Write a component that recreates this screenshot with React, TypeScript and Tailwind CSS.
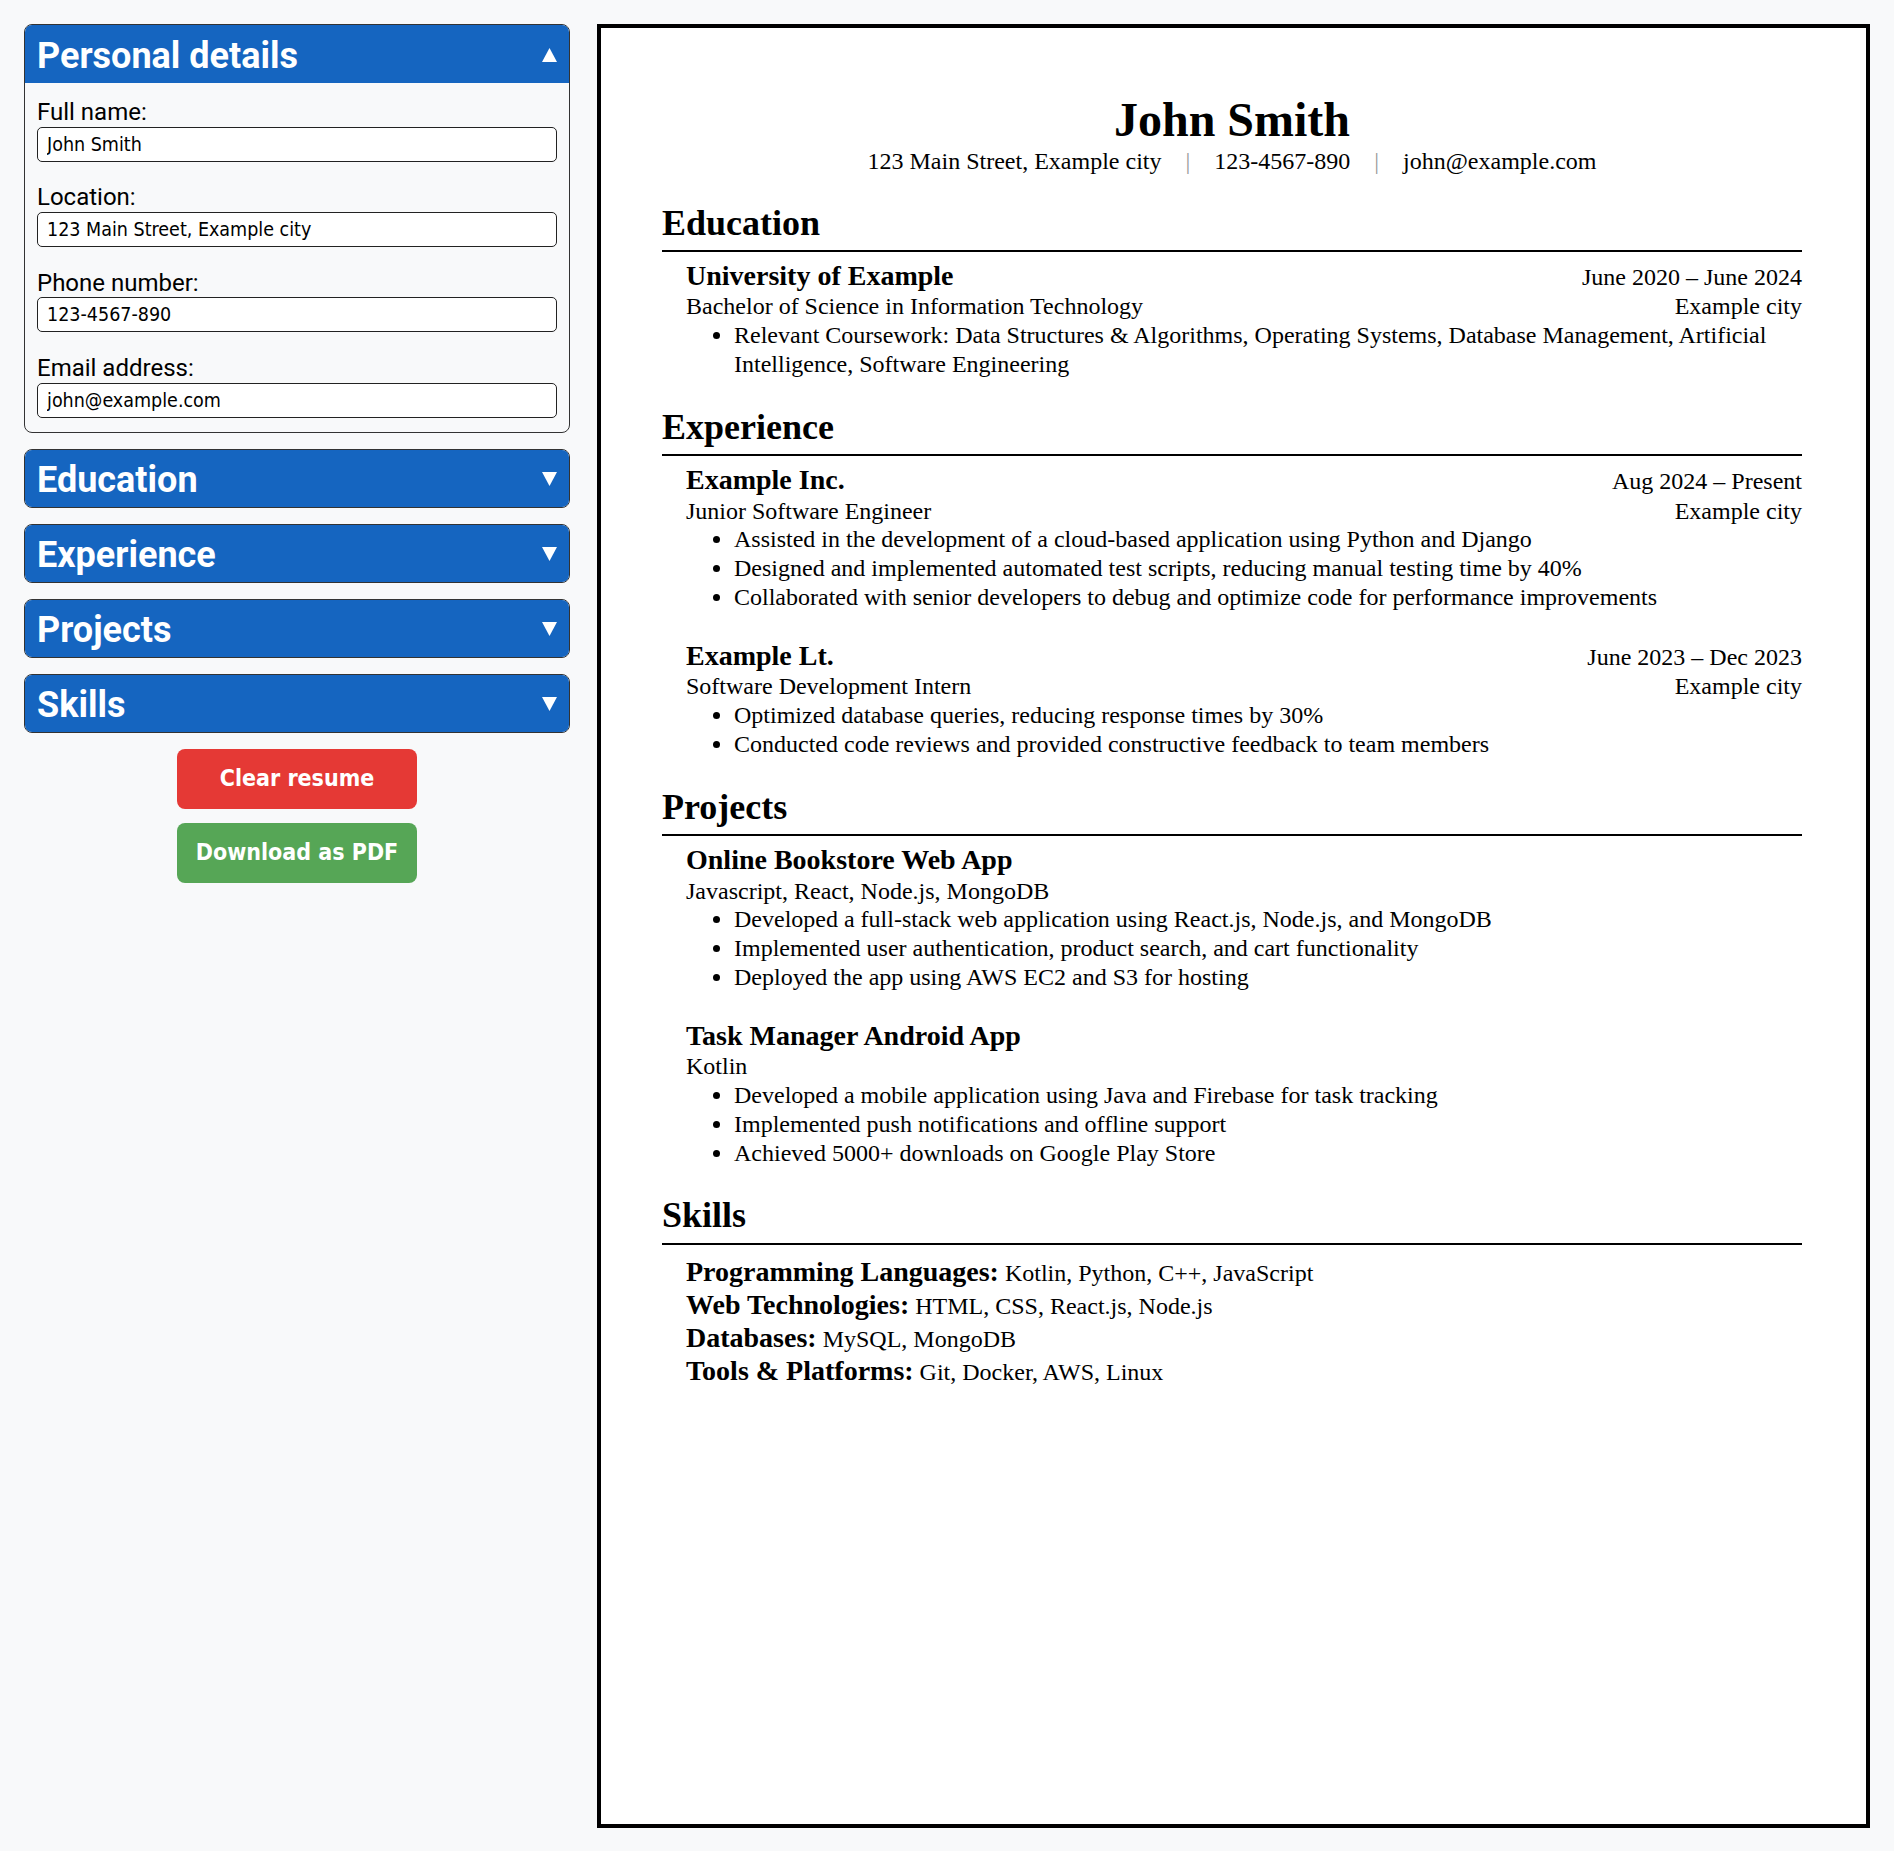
import React from "react";

const BLUE = "bg-[#1565c0]";

const fields = [
  { label: "Full name:", value: "John Smith" },
  { label: "Location:", value: "123 Main Street, Example city" },
  { label: "Phone number:", value: "123-4567-890" },
  { label: "Email address:", value: "john@example.com" },
];

const education = [
  {
    title: "University of Example",
    date: "June 2020 – June 2024",
    sub: "Bachelor of Science in Information Technology",
    place: "Example city",
    points: [
      "Relevant Coursework: Data Structures & Algorithms, Operating Systems, Database Management, Artificial Intelligence, Software Engineering",
    ],
  },
];

const experience = [
  {
    title: "Example Inc.",
    date: "Aug 2024 – Present",
    sub: "Junior Software Engineer",
    place: "Example city",
    points: [
      "Assisted in the development of a cloud-based application using Python and Django",
      "Designed and implemented automated test scripts, reducing manual testing time by 40%",
      "Collaborated with senior developers to debug and optimize code for performance improvements",
    ],
  },
  {
    title: "Example Lt.",
    date: "June 2023 – Dec 2023",
    sub: "Software Development Intern",
    place: "Example city",
    points: [
      "Optimized database queries, reducing response times by 30%",
      "Conducted code reviews and provided constructive feedback to team members",
    ],
  },
];

const projects = [
  {
    title: "Online Bookstore Web App",
    sub: "Javascript, React, Node.js, MongoDB",
    points: [
      "Developed a full-stack web application using React.js, Node.js, and MongoDB",
      "Implemented user authentication, product search, and cart functionality",
      "Deployed the app using AWS EC2 and S3 for hosting",
    ],
  },
  {
    title: "Task Manager Android App",
    sub: "Kotlin",
    points: [
      "Developed a mobile application using Java and Firebase for task tracking",
      "Implemented push notifications and offline support",
      "Achieved 5000+ downloads on Google Play Store",
    ],
  },
];

const skills = [
  { k: "Programming Languages:", v: "Kotlin, Python, C++, JavaScript" },
  { k: "Web Technologies:", v: "HTML, CSS, React.js, Node.js" },
  { k: "Databases:", v: "MySQL, MongoDB" },
  { k: "Tools & Platforms:", v: "Git, Docker, AWS, Linux" },
];

function Triangle({ up }: { up?: boolean }) {
  return (
    <svg width="15" height="14" viewBox="0 0 15 14" className="mt-[2px]">
      <polygon points={up ? "7.5,0 15,14 0,14" : "0,0 15,0 7.5,14"} fill="#fff" />
    </svg>
  );
}

function SectionHeader({ title, up }: { title: string; up?: boolean }) {
  return (
    <div className={`flex items-center justify-between px-3 ${up ? "h-[58px]" : "h-[57px]"} ${BLUE}`}>
      <span className="pt-[5px] text-[36px] font-bold leading-[1.2] text-white">{title}</span>
      <Triangle up={up} />
    </div>
  );
}

type Entry = { title: string; date?: string; sub: string; place?: string; points: string[] };

function ResumeEntry({ e }: { e: Entry }) {
  return (
    <div>
      <div className="flex items-baseline justify-between">
        <span className="text-[28px] font-bold">{e.title}</span>
        {e.date && <span>{e.date}</span>}
      </div>
      <div className="flex justify-between">
        <span>{e.sub}</span>
        {e.place && <span>{e.place}</span>}
      </div>
      <ul className="list-disc pl-[48px]">
        {e.points.map((p) => (
          <li key={p}>{p}</li>
        ))}
      </ul>
    </div>
  );
}

function ResumeSection({ title, first, children }: { title: string; first?: boolean; children: React.ReactNode }) {
  return (
    <section className={first ? "mt-[26px]" : "mt-[27px]"}>
      <h2 className="border-b-2 border-black pb-[5px] text-[36px] font-bold leading-[1.2]">{title}</h2>
      <div className="mt-[7px] flex flex-col gap-[27px] pl-[24px]">{children}</div>
    </section>
  );
}

export default function App() {
  return (
    <div className="flex min-h-screen gap-[27px] bg-[#f8f9fa] px-6 pt-6 pb-[23px]">
      {/* Editor column */}
      <div className="flex w-[546px] shrink-0 flex-col font-['Roboto',sans-serif]">
        <div className="overflow-hidden rounded-[8px] border border-[#333]">
          <SectionHeader title="Personal details" up />
          <div className="flex flex-col gap-[21.5px] px-3 pt-[15px] pb-[14px]">
            {fields.map((f) => (
              <label key={f.label} className="flex flex-col">
                <span className="text-[24px] leading-[1.2] text-black">{f.label}</span>
                <input
                  defaultValue={f.value}
                  className="h-[35px] rounded-[5px] border border-[#222] bg-white pl-[9px] font-['DejaVu_Sans_Condensed','DejaVu_Sans',sans-serif] text-[19.5px] text-black [font-stretch:condensed]"
                />
              </label>
            ))}
          </div>
        </div>

        {["Education", "Experience", "Projects", "Skills"].map((t) => (
          <div key={t} className="mt-4 overflow-hidden rounded-[8px] border border-[#333]">
            <SectionHeader title={t} />
          </div>
        ))}

        <div className="mt-4 flex flex-col items-center gap-[14px] font-['DejaVu_Sans_Condensed','DejaVu_Sans',sans-serif] [font-stretch:condensed]">
          <button className="h-[60px] w-[240px] rounded-[8px] bg-[#e53935] text-[23px] font-bold text-white">
            Clear resume
          </button>
          <button className="h-[60px] w-[240px] rounded-[8px] bg-[#56a656] text-[23px] font-bold text-white">
            Download as PDF
          </button>
        </div>
      </div>

      {/* Resume preview */}
      <div className="h-[1804px] flex-1 border-4 border-black bg-white pt-[66px] pr-[64px] pl-[61px] font-['Liberation_Serif','Times_New_Roman',serif] text-[24px] leading-[1.2] text-black">
        <h1 className="text-center text-[48px] font-bold leading-[1.1]">John Smith</h1>
        <div className="flex justify-center">
          <span>123 Main Street, Example city</span>
          <span className="mx-6 text-[#999]">|</span>
          <span>123-4567-890</span>
          <span className="mx-6 text-[#999]">|</span>
          <span>john@example.com</span>
        </div>

        <ResumeSection title="Education" first>
          {education.map((e) => (
            <ResumeEntry key={e.title} e={e} />
          ))}
        </ResumeSection>

        <ResumeSection title="Experience">
          {experience.map((e) => (
            <ResumeEntry key={e.title} e={e} />
          ))}
        </ResumeSection>

        <ResumeSection title="Projects">
          {projects.map((e) => (
            <ResumeEntry key={e.title} e={e} />
          ))}
        </ResumeSection>

        <ResumeSection title="Skills">
          <div className="mt-[3px]">
            {skills.map((s) => (
              <div key={s.k} className="flex h-[33px] items-baseline gap-[6px]">
                <span className="text-[28px] font-bold">{s.k}</span>
                <span>{s.v}</span>
              </div>
            ))}
          </div>
        </ResumeSection>
      </div>
    </div>
  );
}
